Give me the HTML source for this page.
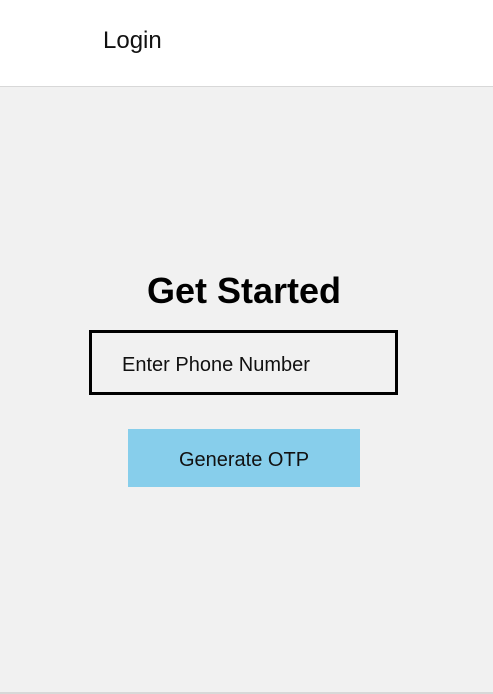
<!DOCTYPE html>
<html><head><style>
body{margin:0;width:493px;height:694px;background:#f1f1f1;font-family:"Liberation Sans",sans-serif;position:relative;overflow:hidden}
.hdr{position:absolute;left:0;top:0;width:493px;height:86px;background:#fff;border-bottom:1px solid #d8d8d8}
.login{position:absolute;left:103px;top:27px;font-size:24px;color:#111}
h1{position:absolute;left:0;width:488px;text-align:center;top:270px;margin:0;font-size:36px;font-weight:bold;color:#000}
.inp{position:absolute;left:89px;top:330px;width:303px;height:59px;border:3px solid #000}
.ph{position:absolute;left:122px;top:354px;font-size:20px;color:#111}
.btn{position:absolute;left:128px;top:429px;width:232px;height:58px;background:#87ceeb;text-align:center;line-height:62px;font-size:20px;color:#111}
.bot{position:absolute;left:0;top:692px;width:493px;height:2px;background:#d8d8d8}
</style></head><body>
<div class="hdr"><div class="login">Login</div></div>
<h1>Get Started</h1>
<div class="inp"></div>
<div class="ph">Enter Phone Number</div>
<div class="btn">Generate OTP</div>
<div class="bot"></div>
</body></html>
